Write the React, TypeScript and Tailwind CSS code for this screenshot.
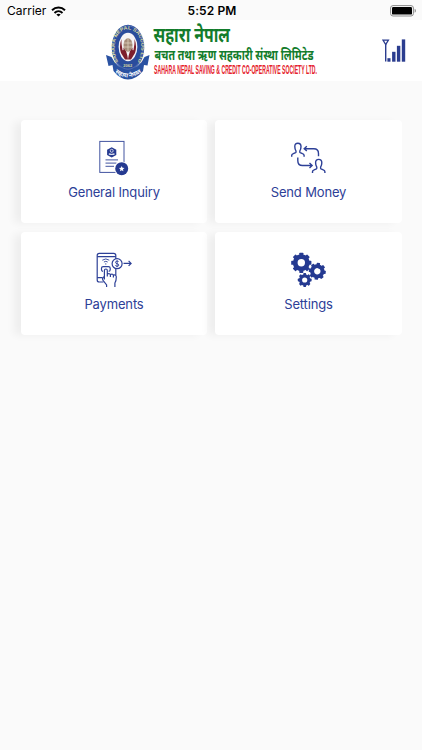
import type { ReactNode } from "react";

type Tile = {
  label: string;
  icon: ReactNode;
};

function WifiIcon() {
  return (
    <svg width="15" height="11" viewBox="0 0 15 11" fill="none" stroke="#000" strokeWidth="2">
      <path d="M1 4.2C4.7 0.6 10.3 0.6 14 4.2" />
      <path d="M3.5 6.9C5.8 4.8 9.2 4.8 11.5 6.9" />
      <path d="M7.5 10.6 5.3 8.5C6.5 7.4 8.5 7.4 9.7 8.5Z" fill="#000" stroke="none" />
    </svg>
  );
}

function BatteryIcon() {
  return (
    <svg width="27" height="12" viewBox="0 0 27 12">
      <rect x="0.6" y="0.6" width="22.8" height="10.4" rx="2.4" fill="none" stroke="#8b8b8b" />
      <rect x="2" y="2" width="20" height="7.6" rx="1.2" fill="#000" />
      <path d="M24.6 3.8C26.4 4.6 26.4 7 24.6 7.8Z" fill="#8b8b8b" />
    </svg>
  );
}

function SignalIcon() {
  return (
    <svg width="24" height="24" viewBox="0 0 24 24" fill="#2b3d8f">
      <path d="M1 1.2H6.4L3.7 5.6Z" fill="none" stroke="#2b3d8f" strokeWidth="1.3" />
      <path d="M3.7 5V22.6" stroke="#2b3d8f" strokeWidth="1.4" />
      <rect x="5.4" y="19.2" width="3.1" height="3.5" />
      <rect x="10.1" y="12.8" width="3.4" height="9.9" />
      <rect x="14.9" y="6.8" width="3.4" height="15.9" />
      <rect x="19.8" y="0.4" width="3.4" height="22.3" />
    </svg>
  );
}

function Logo() {
  return (
    <svg className="overflow-visible" width="216" height="60" viewBox="105 21 216 60">
      <defs>
        <path id="ring" d="M118.4 62C111.6 50 114.2 29.6 128 29.4C141.8 29.6 144.4 50 137.6 62" />
        <path id="ribbon" d="M112.5 70.5Q128 84 143.5 70.5" />
      </defs>

      <path
        d="M106 55L111.5 57Q117 69 128 69Q139 69 144.5 57L149.5 55L147.5 65.5L144 65L143 71Q136 79.5 128 79.5Q120 79.5 113.5 71L112.5 65L108.5 66Z"
        fill="#2a52a2"
      />
      <ellipse cx="128" cy="47.5" rx="16.2" ry="22.8" fill="#2a4c9c" />
      <ellipse cx="128" cy="47.5" rx="15.2" ry="21.7" fill="none" stroke="#7893c8" strokeWidth="0.5" />
      <ellipse cx="128" cy="47" rx="9.4" ry="14.2" fill="#f5f3f5" />
      <path
        d="M121.4 39Q118.8 47 121 53L125 59.5H128L127.3 55.5Q127 51 123.5 47.5Q123.8 51 122.5 50Q121.2 44 121.4 39Z"
        fill="#7d1f2c"
      />
      <path
        d="M134.6 39Q137.2 47 135 53L131 59.5H128L128.7 55.5Q129 51 132.5 47.5Q132.2 51 133.5 50Q134.8 44 134.6 39Z"
        fill="#7d1f2c"
      />
      <ellipse cx="128" cy="45" rx="4.5" ry="6.7" fill="#a58c78" />
      <path d="M124 43H132M124 47H132M128 38.5V51.5" stroke="#ddd0bd" strokeWidth="0.8" />
      <text fontFamily="Liberation Sans, sans-serif" fontSize="4.8" fontWeight="700" fill="#d9d9a0">
        <textPath href="#ring" textLength="80" lengthAdjust="spacingAndGlyphs">
          SAHARA NEPAL SACCOS LTD
        </textPath>
      </text>
      <text x="127.7" y="67" textAnchor="middle" fontFamily="Liberation Sans, sans-serif" fontSize="4" fontWeight="700" fill="#d9d9a0">
        2062
      </text>
      <text fontFamily="Noto Sans, sans-serif" fontSize="6" fontWeight="700" fill="#fff">
        <textPath href="#ribbon" startOffset="3" textLength="29" lengthAdjust="spacingAndGlyphs">
          सहारा नेपाल
        </textPath>
      </text>

      <text x="153.5" y="42.3" textLength="76.5" lengthAdjust="spacingAndGlyphs" fontFamily="Noto Sans, sans-serif" fontSize="20" fontWeight="700" fill="#127c2b">
        सहारा नेपाल
      </text>
      <text x="154.5" y="60" textLength="159" lengthAdjust="spacingAndGlyphs" fontFamily="Noto Sans, sans-serif" fontSize="13.5" fontWeight="700" fill="#127c2b">
        बचत तथा ऋण सहकारी संस्था लिमिटेड
      </text>
      <text x="154" y="73.7" textLength="163" lengthAdjust="spacingAndGlyphs" fontFamily="Liberation Sans, sans-serif" fontSize="12" fontWeight="700" fill="#e5202b">
        SAHARA NEPAL SAVING &amp; CREDIT CO-OPERATIVE SOCIETY LTD.
      </text>
    </svg>
  );
}

function InquiryIcon() {
  return (
    <svg width="36" height="38" viewBox="0 0 36 38">
      <rect x="3.8" y="3.4" width="24.2" height="31" fill="#fff" stroke="#4254a0" strokeWidth="1" />
      <path d="M15.7 9.2L20.3 11.8V17L15.7 19.6L11.1 17V11.8Z" fill="#253a91" />
      <circle cx="15.7" cy="12.8" r="1.5" fill="none" stroke="#fff" strokeWidth="0.7" />
      <path d="M13.2 16.5V15.6Q15.7 17 18.2 15.6V16.5Z" fill="none" stroke="#fff" strokeWidth="0.7" />
      <path d="M9.5 21.9H22M9.5 25.1H20.5M9.5 28.3H18" stroke="#4254a0" strokeWidth="1" />
      <circle cx="25.7" cy="30.7" r="7.3" fill="#fff" />
      <circle cx="25.7" cy="30.7" r="6.5" fill="#253a91" />
      <path d="M25.7 27.9L26.5 29.8L28.5 30L27 31.3L27.4 33.2L25.7 32.2L24 33.2L24.4 31.3L22.9 30L24.9 29.8Z" fill="#fff" />
    </svg>
  );
}

const PERSON =
  "M-6.2 13.8V12.6Q-6.2 11.3 -4.6 10.7L-2.3 9.7Q-1.7 9.3 -1.9 8.1Q-3.1 6.2 -3.1 3.6Q-3.1 0.3 0 0.3Q3.1 0.3 3.1 3.6Q3.1 6.2 1.9 8.1Q1.7 9.3 2.3 9.7L4.6 10.7Q6.2 11.3 6.2 12.6V13.8";

function SendMoneyIcon() {
  return (
    <svg width="37" height="38" viewBox="0 0 37 38" fill="none" stroke="#2d4097" strokeWidth="1.4">
      <path d={PERSON} transform="translate(7.9 4.9)" />
      <path d={PERSON} transform="translate(28.7 21.1)" />
      <path d="M28.5 18.3V15.5Q28.5 10.7 23.8 10.7H14.4M16.8 8.3L14.2 10.7L16.8 13.1" />
      <path d="M7.8 19.6V22.7Q7.8 27.5 12.5 27.5H21.9M19.5 25.1L22.1 27.5L19.5 29.9" />
    </svg>
  );
}

function PaymentsIcon() {
  return (
    <svg width="36" height="38" viewBox="0 0 36 38" fill="none" stroke="#2d4097" strokeWidth="1.2">
      <path d="M19.8 9V5.5Q19.8 3.4 17.7 3.4H3.2Q1.2 3.4 1.2 5.5V30Q1.2 32 3.2 32H7.5M19.8 18.5V25" />
      <path d="M1.2 6.7H19.8M1.2 27.6H6.5" />
      <path d="M6.3 10.2Q9.8 7.7 13.3 10.2M7.9 12Q9.8 10.6 11.7 12" strokeWidth="0.9" />
      <circle cx="9.8" cy="13.9" r="0.6" fill="#2d4097" stroke="none" />
      <path d="M7 21.4Q5.5 21.2 5.5 19.8V18.3Q5.5 16.6 7.2 16.6H12.5Q14.2 16.6 14.2 18.3V19.8Q14.2 21.2 12.7 21.4" />
      <path d="M8.4 29.5V20.5Q8.4 19 9.9 19Q11.3 19 11.3 20.5V26.5M11.3 24Q14 23 14.4 25V27M14.4 24.5Q17 23.5 17.4 25.5V27.5M17.4 25Q20.3 24.5 20.3 27Q20.3 31 18.9 33V37M8.4 26.5Q5.9 27.5 6.8 30L10.6 35V37" />
      <circle cx="21.1" cy="13.7" r="5" fill="#fff" />
      <path d="M22.7 12Q22.3 11.1 21.1 11.1Q19.5 11.1 19.5 12.4Q19.5 13.4 21.1 13.7Q22.8 14 22.8 15.1Q22.8 16.3 21.1 16.3Q19.7 16.3 19.4 15.3M21.1 10.2V17.2" strokeWidth="0.9" />
      <path d="M27.5 13.4H35M32.6 10.9L35.1 13.4L32.6 15.9" />
    </svg>
  );
}

function Gear({ x, y, r, hole, turn = 0 }: { x: number; y: number; r: number; hole: number; turn?: number }) {
  const body = r * 0.84;
  const tooth = r * 0.4;
  return (
    <g transform={`translate(${x} ${y}) rotate(${turn})`}>
      <circle r={(body + hole) / 2} fill="none" stroke="#253a91" strokeWidth={body - hole} />
      {[0, 45, 90, 135, 180, 225, 270, 315].map((a) => (
        <rect
          key={a}
          x={-tooth / 2}
          y={-r}
          width={tooth}
          height={r * 0.35}
          rx={0.6}
          fill="#253a91"
          transform={`rotate(${a})`}
        />
      ))}
    </g>
  );
}

function SettingsIcon() {
  return (
    <svg width="37" height="38" viewBox="0 0 37 38">
      <Gear x={11.3} y={12.8} r={10.1} hole={3.7} />
      <Gear x={27.3} y={21.3} r={8.5} hole={3.2} turn={8} />
      <Gear x={14.7} y={30} r={6.9} hole={2.6} />
    </svg>
  );
}

const tiles: Tile[] = [
  { label: "General Inquiry", icon: <InquiryIcon /> },
  { label: "Send Money", icon: <SendMoneyIcon /> },
  { label: "Payments", icon: <PaymentsIcon /> },
  { label: "Settings", icon: <SettingsIcon /> },
];

export default function App() {
  return (
    <div className="h-[750px] w-full overflow-hidden bg-[#fafafa] font-['Inter',sans-serif]">
      <div className="grid h-5 grid-cols-3 items-center pl-[7px] pr-[5px] pt-[2px] text-[12px] leading-none text-black">
        <div className="flex items-center gap-[5px]">
          <span className="tracking-[0px]">Carrier</span>
          <WifiIcon />
        </div>
        <span className="text-center font-semibold tracking-[0.1px]">5:52 PM</span>
        <div className="flex justify-end">
          <BatteryIcon />
        </div>
      </div>

      <header className="flex h-[61px] items-center justify-between bg-white pl-[105px] pr-4">
        <Logo />
        <SignalIcon />
      </header>

      <main className="grid grid-cols-[186px_187px] gap-x-2 gap-y-[9px] pl-[21px] pt-[39px]">
        {tiles.map((tile) => (
          <button
            key={tile.label}
            className="flex h-[103px] flex-col items-center rounded-[4px] bg-white pt-[18px] shadow-[-8px_1px_8px_-1px_rgba(0,0,0,0.05)]"
          >
            {tile.icon}
            <span className="mt-[8px] text-[13px] leading-4 tracking-[-0.15px] text-[#2d4097]">{tile.label}</span>
          </button>
        ))}
      </main>
    </div>
  );
}
